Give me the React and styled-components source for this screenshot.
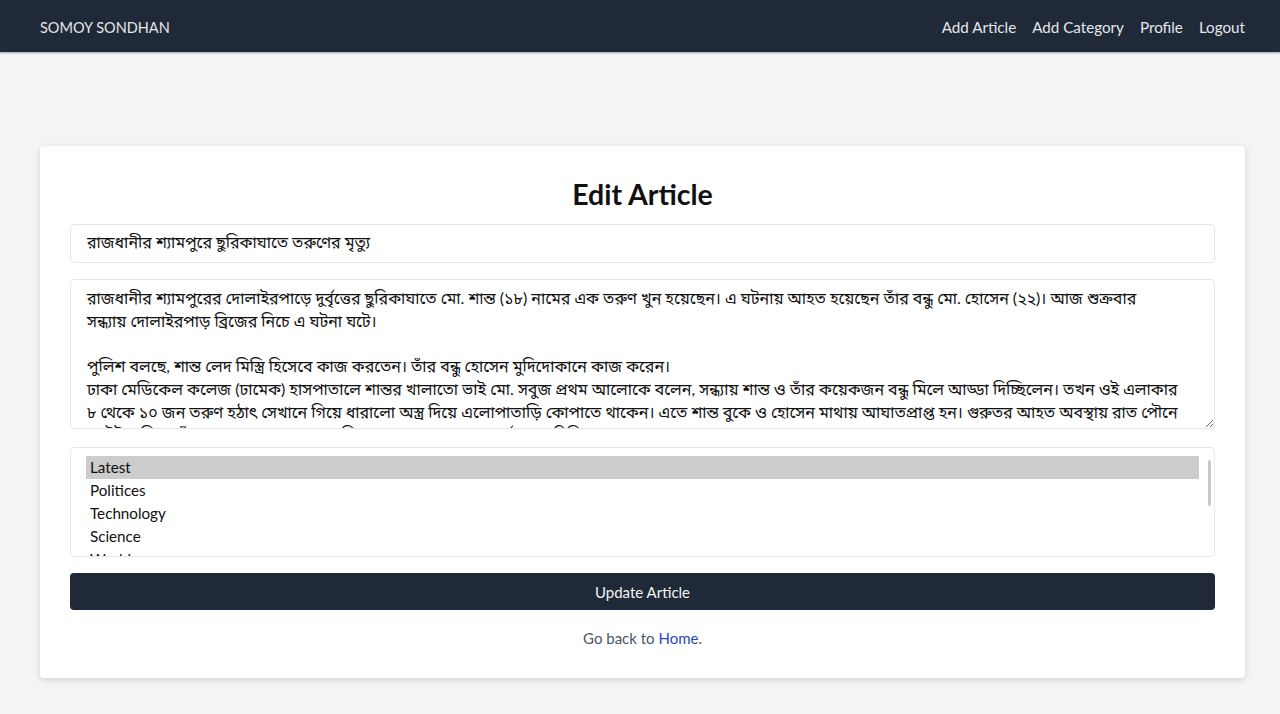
import React from "react";
import styled, { createGlobalStyle } from "styled-components";

const GlobalStyle = createGlobalStyle`
  * {
    box-sizing: border-box;
  }

  body {
    margin: 0;
    background-color: #f3f4f6;
    font-family: "Segoe UI", Lato, "Noto Sans Bengali", "Noto Sans", sans-serif;
    color: #111827;
  }
`;

const SCNavbar = styled.nav`
  height: 52px;
  background-color: #1f2937;
  display: flex;
  align-items: center;
  justify-content: space-between;
  padding: 2px 35px 0 40px;
  box-shadow: 0 1px 2px rgba(0, 0, 0, 0.35);
`;

const SCBrand = styled.a`
  color: #e5e7eb;
  font-size: 14.5px;
  text-decoration: none;
`;

const SCNavLinks = styled.div`
  display: flex;
  gap: 16px;
`;

const SCNavLink = styled.a`
  color: #e5e7eb;
  font-size: 15.2px;
  text-decoration: none;
`;

const SCMain = styled.main`
  padding: 94px 35px 36px 40px;
`;

const SCCard = styled.div`
  background-color: #ffffff;
  border-radius: 4px;
  box-shadow: 0 2px 6px rgba(0, 0, 0, 0.14);
  padding: 30px;
  display: flex;
  flex-direction: column;
`;

const SCHeading = styled.h2`
  margin: 0 0 12px;
  text-align: center;
  font-size: 28.5px;
  line-height: 36px;
  font-weight: 700;
  color: #111111;
`;

const SCInput = styled.input`
  height: 39px;
  border: 1px solid #e5e7eb;
  border-radius: 4px;
  padding: 0 16px;
  font-family: inherit;
  font-size: 16px;
  color: #111111;
  margin-bottom: 16px;
  outline: none;
`;

const SCTextArea = styled.textarea`
  height: 150px;
  border: 1px solid #e5e7eb;
  border-radius: 4px;
  padding: 7px 16px;
  font-family: inherit;
  font-size: 16px;
  line-height: 22.7px;
  color: #111111;
  margin-bottom: 18px;
  overflow: hidden;
  outline: none;
`;

const SCListBox = styled.div`
  height: 110px;
  border: 1px solid #e5e7eb;
  border-radius: 4px;
  padding: 8px 2px 0 15px;
  display: flex;
  overflow: hidden;
  margin-bottom: 16px;
`;

const SCOptions = styled.ul`
  flex: 1;
  list-style: none;
  margin: 0;
  padding: 0;
`;

const SCOption = styled.li`
  height: 23px;
  line-height: 23px;
  padding-left: 4px;
  font-size: 15.2px;
  color: #111111;
  background-color: ${(props) => (props.selected ? "#cccccc" : "transparent")};
`;

const SCScrollTrack = styled.div`
  width: 4px;
  margin-left: 9px;
  padding-top: 4px;
`;

const SCScrollThumb = styled.div`
  width: 3px;
  height: 46px;
  border-radius: 2px;
  background-color: #c9c9c9;
`;

const SCButton = styled.button`
  height: 37px;
  border: none;
  border-radius: 4px;
  background-color: #1f2937;
  color: #f3f4f6;
  font-family: inherit;
  font-size: 15px;
  cursor: pointer;
  margin-bottom: 18px;
`;

const SCFooterText = styled.p`
  margin: 0;
  text-align: center;
  font-size: 15px;
  line-height: 20px;
  color: #4b5563;
`;

const SCHomeLink = styled.a`
  color: #2747b8;
  text-decoration: none;
`;

const title = "রাজধানীর শ্যামপুরে ছুরিকাঘাতে তরুণের মৃত্যু";

const body = [
  "রাজধানীর শ্যামপুরের দোলাইরপাড়ে দুর্বৃত্তের ছুরিকাঘাতে মো. শান্ত (১৮) নামের এক তরুণ খুন হয়েছেন। এ ঘটনায় আহত হয়েছেন তাঁর বন্ধু মো. হোসেন (২২)। আজ শুক্রবার",
  "সন্ধ্যায় দোলাইরপাড় ব্রিজের নিচে এ ঘটনা ঘটে।",
  "",
  "পুলিশ বলছে, শান্ত লেদ মিস্ত্রি হিসেবে কাজ করতেন। তাঁর বন্ধু হোসেন মুদিদোকানে কাজ করেন।",
  "ঢাকা মেডিকেল কলেজ (ঢামেক) হাসপাতালে শান্তর খালাতো ভাই মো. সবুজ প্রথম আলোকে বলেন, সন্ধ্যায় শান্ত ও তাঁর কয়েকজন বন্ধু মিলে আড্ডা দিচ্ছিলেন। তখন ওই এলাকার",
  "৮ থেকে ১০ জন তরুণ হঠাৎ সেখানে গিয়ে ধারালো অস্ত্র দিয়ে এলোপাতাড়ি কোপাতে থাকেন। এতে শান্ত বুকে ও হোসেন মাথায় আঘাতপ্রাপ্ত হন। গুরুতর আহত অবস্থায় রাত পৌনে",
  "আটটার দিকে তাঁদের ঢামেক হাসপাতালে নিয়ে আসা হয়। সেখানে কর্তব্যরত চিকিৎসক শান্তকে মৃত ঘোষণা করেন।",
].join("\n");

const categories = ["Latest", "Politices", "Technology", "Science", "World", "Sports"];

function App() {
  return (
    <>
      <GlobalStyle />
      <SCNavbar>
        <SCBrand href="#">SOMOY SONDHAN</SCBrand>
        <SCNavLinks>
          <SCNavLink href="#">Add Article</SCNavLink>
          <SCNavLink href="#">Add Category</SCNavLink>
          <SCNavLink href="#">Profile</SCNavLink>
          <SCNavLink href="#">Logout</SCNavLink>
        </SCNavLinks>
      </SCNavbar>
      <SCMain>
        <SCCard>
          <SCHeading>Edit Article</SCHeading>
          <SCInput defaultValue={title} />
          <SCTextArea defaultValue={body} />
          <SCListBox>
            <SCOptions>
              {categories.map((name, i) => (
                <SCOption key={name} selected={i === 0}>
                  {name}
                </SCOption>
              ))}
            </SCOptions>
            <SCScrollTrack>
              <SCScrollThumb />
            </SCScrollTrack>
          </SCListBox>
          <SCButton>Update Article</SCButton>
          <SCFooterText>
            Go back to <SCHomeLink href="#">Home</SCHomeLink>.
          </SCFooterText>
        </SCCard>
      </SCMain>
    </>
  );
}

export default App;
